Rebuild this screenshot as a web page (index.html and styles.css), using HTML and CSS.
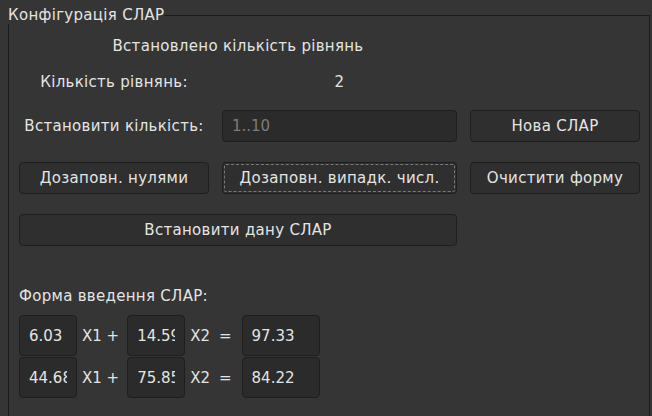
FILE: index.html
```html
<!DOCTYPE html>
<html lang="uk">
<head>
<meta charset="utf-8">
<title>Конфігурація СЛАР</title>
<link rel="stylesheet" href="styles.css">
</head>
<body>
<div class="group">
  <div class="group-head">
    <span class="group-title">Конфігурація СЛАР</span>
    <span class="group-line"></span>
  </div>
  <div class="group-body">
    <div class="info">
      <div class="status">Встановлено кількість рівнянь</div>
      <div class="cell-center row2">Кількість рівнянь:</div>
      <div class="cell-center row2">2</div>
    </div>
    <div class="controls">
      <div class="cell-center">Встановити кількість:</div>
      <input class="field" type="text" placeholder="1..10">
      <button class="btn">Нова СЛАР</button>
      <button class="btn">Дозаповн. нулями</button>
      <button class="btn focused">Дозаповн. випадк. числ.</button>
      <button class="btn">Очистити форму</button>
      <button class="btn wide">Встановити дану СЛАР</button>
    </div>
    <div class="form-label">Форма введення СЛАР:</div>
    <div class="matrix">
      <div class="eq">
        <input class="coef" type="text" value="6.03">
        <span class="var v1">X1 +</span>
        <input class="coef" type="text" value="14.59">
        <span class="var v2">X2</span>
        <span class="eqsign">=</span>
        <input class="rhs" type="text" value="97.33">
      </div>
      <div class="eq">
        <input class="coef" type="text" value="44.68">
        <span class="var v1">X1 +</span>
        <input class="coef" type="text" value="75.85">
        <span class="var v2">X2</span>
        <span class="eqsign">=</span>
        <input class="rhs" type="text" value="84.22">
      </div>
    </div>
  </div>
</div>
</body>
</html>
```

FILE: styles.css
```css
html, body {
  margin: 0;
  padding: 0;
  background: #353535;
  height: 100%;
  overflow: hidden;
}

body {
  font-family: "DejaVu Sans", sans-serif;
  font-size: 15px;
  line-height: 18px;
  letter-spacing: 0.3px;
  color: #e4e4e4;
}

.group {
  margin: 0 2px 0 8px;
}

.group-head {
  display: flex;
  padding-top: 6px;
}

.group-title {
  white-space: nowrap;
}

.group-line {
  flex: 1;
  margin-top: 9px;
  border-top: 1px solid #1c1c1c;
  border-right: 1px solid #1c1c1c;
}

.group-body {
  border-left: 1px solid #1c1c1c;
  border-right: 1px solid #1c1c1c;
  padding-left: 10px;
  height: 392px;
  box-sizing: border-box;
}

.info,
.controls {
  display: grid;
  grid-template-columns: 190px 235px 170px;
  column-gap: 13px;
}

.info {
  grid-template-rows: 44px 28px;
  align-items: center;
}

.status {
  grid-column: 1 / 3;
  grid-row: 1;
  text-align: center;
}

.row2 {
  grid-row: 2;
}

.cell-center {
  text-align: center;
  align-self: center;
}

.controls {
  margin-top: 14px;
  grid-auto-rows: 32px;
  row-gap: 20px;
}

.field,
.btn,
.coef,
.rhs {
  font-family: "DejaVu Sans", sans-serif;
  font-size: 15px;
  letter-spacing: 0.3px;
  color: #e4e4e4;
  border: 1px solid #1e1e1e;
  border-radius: 4px;
  box-sizing: border-box;
  margin: 0;
  outline: none;
}

.field {
  background: #2b2b2b;
  padding: 0 9px;
  height: 32px;
  letter-spacing: 0;
}

.field::placeholder {
  color: #7c7c7c;
}

.btn {
  background: #2f2f2f;
  height: 32px;
  padding: 0;
  text-align: center;
}

.btn.focused {
  outline: 1px dashed #7a7a7a;
  outline-offset: -3px;
}

.btn.wide {
  grid-column: 1 / 3;
}

.form-label {
  margin-top: 41px;
}

.matrix {
  margin-top: 10px;
  display: flex;
  flex-direction: column;
  gap: 1px;
}

.eq {
  display: flex;
  align-items: center;
  height: 41px;
  letter-spacing: 0;
}

.coef,
.rhs {
  background: #2b2b2b;
  height: 41px;
  letter-spacing: 0;
}

.coef {
  width: 58px;
  padding: 0 9px 0 9px;
}

.rhs {
  width: 78px;
  padding: 0 2px 0 9px;
}

.var {
  white-space: nowrap;
}

.v1 {
  margin: 0 8px 0 5px;
}

.v2 {
  margin: 0 0 0 5px;
}

.eqsign {
  margin: 0 10px 0 9px;
}
```
